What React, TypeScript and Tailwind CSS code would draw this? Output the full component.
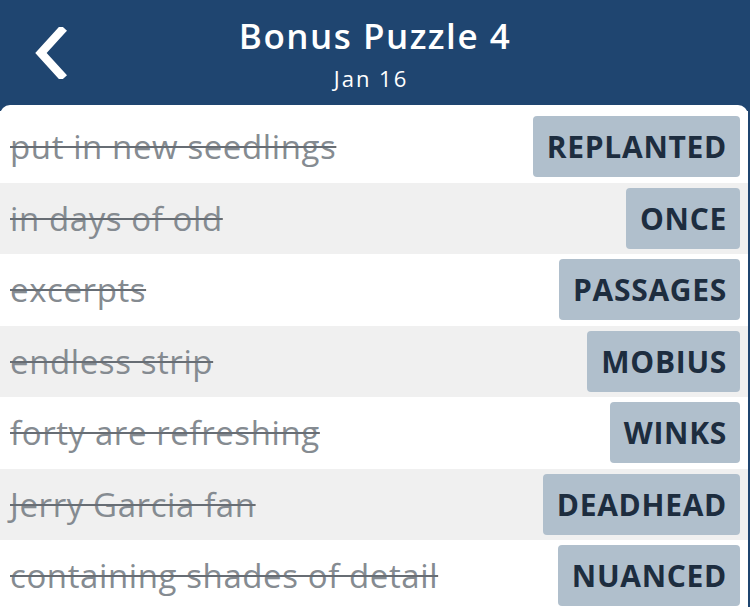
const clues = [
  { clue: "put in new seedlings", answer: "REPLANTED" },
  { clue: "in days of old", answer: "ONCE" },
  { clue: "excerpts", answer: "PASSAGES" },
  { clue: "endless strip", answer: "MOBIUS" },
  { clue: "forty are refreshing", answer: "WINKS" },
  { clue: "Jerry Garcia fan", answer: "DEADHEAD" },
  { clue: "containing shades of detail", answer: "NUANCED" },
];

function BackIcon() {
  return (
    <svg width="34" height="52" viewBox="0 0 34 52" className="block">
      <polyline
        points="28,4 8,26 28,48"
        fill="none"
        stroke="white"
        strokeWidth="8.5"
        strokeLinecap="square"
        strokeLinejoin="miter"
      />
    </svg>
  );
}

export default function App() {
  return (
    <div
      className="h-[607px] w-[750px] overflow-hidden bg-[#1f4570]"
      style={{ fontFamily: "'Open Sans', 'Noto Sans', sans-serif" }}
    >
      <header className="relative flex h-[105px] flex-col items-center pt-[13px]">
        <button className="absolute left-[33px] top-[27px]">
          <BackIcon />
        </button>
        <h1 className="text-[35px] font-semibold leading-[46px] tracking-[1.5px] text-white">
          Bonus Puzzle 4
        </h1>
        <p className="mt-[5px] pr-[8px] text-[22px] leading-[28px] tracking-[2px] text-white">
          Jan 16
        </p>
      </header>

      <div className="mr-[2px] h-[520px] rounded-t-[10px] bg-white pt-[6px]">
        {clues.map((item, i) => (
          <div
            key={item.answer}
            className={`flex h-[71.5px] items-center justify-between pl-[10px] pr-[8px] ${
              i % 2 === 1 ? "bg-[#f0f0f0]" : "bg-white"
            }`}
          >
            <span className="text-[33px] leading-none tracking-[0.6px] text-[#858b91] line-through decoration-[#676d74] decoration-2">
              {item.clue}
            </span>
            <span className="flex h-[61px] items-center rounded-[4px] bg-[#b0bfcc] pl-[14px] pr-[13px] text-[30px] font-bold tracking-[0.7px] text-[#1d2d3f]">
              {item.answer}
            </span>
          </div>
        ))}
      </div>
    </div>
  );
}
